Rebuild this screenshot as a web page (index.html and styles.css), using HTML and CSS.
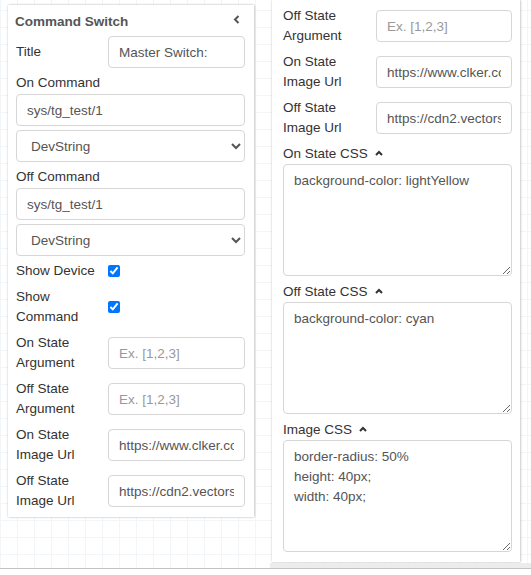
FILE: index.html
```html
<!DOCTYPE html>
<html>
<head>
<meta charset="utf-8">
<link rel="stylesheet" href="styles.css">
</head>
<body>
<div class="stage">
  <div class="shot shot-left">
    <section class="panel panel-a">
      <header class="panel-head">
        <span class="panel-title">Command Switch</span>
        <svg class="collapse" width="7" height="9" viewBox="0 0 7 9"><path d="M5.5 1 L2 4.5 L5.5 8" fill="none" stroke="#555" stroke-width="2"/></svg>
      </header>
      <div class="row row-one">
        <label class="lbl">Title</label>
        <input class="field" type="text" value="Master Switch:">
      </div>
      <div class="group">
        <label class="lbl">On Command</label>
        <input class="field field-top" type="text" value="sys/tg_test/1">
        <select class="field field-select"><option>DevString</option></select>
      </div>
      <div class="group">
        <label class="lbl">Off Command</label>
        <input class="field field-top" type="text" value="sys/tg_test/1">
        <select class="field field-select"><option>DevString</option></select>
      </div>
      <div class="row row-check">
        <label class="lbl">Show Device</label>
        <span><input class="check" type="checkbox" checked></span>
      </div>
      <div class="row row-two">
        <label class="lbl">Show Command</label>
        <span><input class="check" type="checkbox" checked></span>
      </div>
      <div class="row row-two">
        <label class="lbl">On State Argument</label>
        <input class="field" type="text" placeholder="Ex. [1,2,3]">
      </div>
      <div class="row row-two">
        <label class="lbl">Off State Argument</label>
        <input class="field" type="text" placeholder="Ex. [1,2,3]">
      </div>
      <div class="row row-two">
        <label class="lbl">On State Image Url</label>
        <input class="field" type="text" value="https://www.clker.com/cliparts/on-button.png">
      </div>
      <div class="row row-two">
        <label class="lbl">Off State Image Url</label>
        <input class="field" type="text" value="https://cdn2.vectorstock.com/i/off-button.jpg">
      </div>
    </section>
  </div>
  <div class="shot shot-right">
    <section class="panel panel-b">
      <div class="row row-two">
        <label class="lbl">Off State Argument</label>
        <input class="field" type="text" placeholder="Ex. [1,2,3]">
      </div>
      <div class="row row-two">
        <label class="lbl">On State Image Url</label>
        <input class="field" type="text" value="https://www.clker.com/cliparts/on-button.png">
      </div>
      <div class="row row-two">
        <label class="lbl">Off State Image Url</label>
        <input class="field" type="text" value="https://cdn2.vectorstock.com/i/off-button.jpg">
      </div>
      <div class="css-group">
        <div class="css-head">On State CSS <svg class="caret" width="8" height="6" viewBox="0 0 8 6"><path d="M1 5 L4 2 L7 5" fill="none" stroke="#333" stroke-width="2"/></svg></div>
        <textarea class="area">background-color: lightYellow</textarea>
      </div>
      <div class="css-group">
        <div class="css-head">Off State CSS <svg class="caret" width="8" height="6" viewBox="0 0 8 6"><path d="M1 5 L4 2 L7 5" fill="none" stroke="#333" stroke-width="2"/></svg></div>
        <textarea class="area">background-color: cyan</textarea>
      </div>
      <div class="css-group">
        <div class="css-head">Image CSS <svg class="caret" width="8" height="6" viewBox="0 0 8 6"><path d="M1 5 L4 2 L7 5" fill="none" stroke="#333" stroke-width="2"/></svg></div>
        <textarea class="area">border-radius: 50%
height: 40px;
width: 40px;</textarea>
      </div>
    </section>
    <div class="band"></div>
  </div>
</div>
</body>
</html>
```
FILE: styles.css
```css
* { box-sizing: border-box; }
html, body { margin: 0; background: #fff; }
body {
  font-family: "Liberation Sans", Arial, sans-serif;
  font-size: 13.5px;
  color: #333;
}
.stage {
  display: flex;
  height: 569px;
  border-bottom: 1px solid #c2c2c2;
  background-color: #fff;
  background-image:
    linear-gradient(to right, #f3f6f8 1px, transparent 1px),
    linear-gradient(to bottom, #f3f6f8 1px, transparent 1px);
  background-size: 17px 17px;
  background-position: 0 10px;
}
.shot-left {
  padding: 5px 0 0 8px;
  width: 254px;
}
.shot-right {
  margin-left: 16px;
  flex: 1;
  display: flex;
  flex-direction: column;
}
.panel {
  background: #fff;
  box-shadow: 0 0 2px rgba(0,0,0,0.22), 1px 0 2px rgba(0,0,0,0.12);
}
.panel-a {
  width: 246px;
  height: 512px;
  padding: 6px 9px 0 8px;
}
.panel-b {
  margin-left: 2px;
  width: 248px;
  height: 562px;
  padding: 6px 8px 0 11px;
}
.band {
  margin-top: 1px;
  height: 5px;
  background: #ececec;
}
.panel-head {
  display: flex;
  justify-content: space-between;
  align-items: center;
  height: 20px;
  margin: 0 0 5px -1px;
}
.panel-title {
  font-weight: bold;
  color: #555;
  font-size: 13.5px;
}
.collapse { margin-right: 5px; margin-top: -3px; }
.lbl { line-height: 20px; display: block; }
.row {
  display: grid;
  grid-template-columns: 92px 1fr;
  align-items: center;
  margin-bottom: 6px;
}
.panel-b .row { grid-template-columns: 93px 1fr; }
.row-one { height: 32px; margin-bottom: 5px; }
.row-check { height: 20px; }
.row-two { height: 40px; }
.group { margin-bottom: 5px; }
.field {
  display: block;
  width: 100%;
  height: 32px;
  padding: 6px 10px;
  border: 1px solid #d6d6d6;
  border-radius: 4px;
  background: #fff;
  font-family: inherit;
  font-size: 13.5px;
  color: #555;
  outline: none;
}
.field::placeholder { color: #999; }
.field-top { margin-top: 1px; }
.field-select { margin-top: 4px; }
.check {
  display: block;
  width: 12px;
  height: 12px;
  margin: 0;
}
.css-group { margin-bottom: 6px; }
.css-head {
  line-height: 20px;
  display: flex;
  align-items: center;
  gap: 7px;
}
.caret { margin-top: -2px; }
.area {
  display: block;
  width: 100%;
  height: 112px;
  padding: 6px 10px;
  border: 1px solid #d6d6d6;
  border-radius: 4px;
  font-family: inherit;
  font-size: 13.5px;
  line-height: 20px;
  color: #555;
  resize: vertical;
  outline: none;
}
```
